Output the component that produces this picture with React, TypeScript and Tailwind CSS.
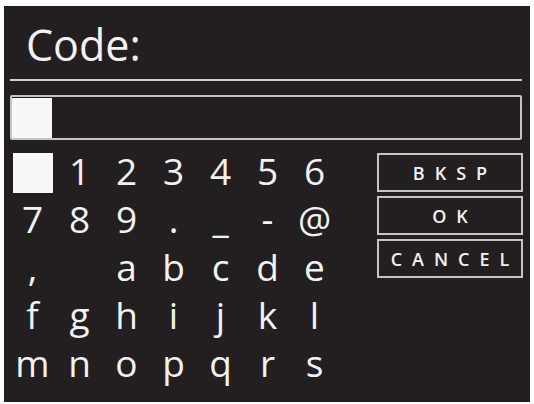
const rows: string[][] = [
  ['', '1', '2', '3', '4', '5', '6'],
  ['7', '8', '9', '.', '_', '-', '@'],
  [',', ' ', 'a', 'b', 'c', 'd', 'e'],
  ['f', 'g', 'h', 'i', 'j', 'k', 'l'],
  ['m', 'n', 'o', 'p', 'q', 'r', 's'],
];

const buttons = ['BKSP', 'OK', 'CANCEL'];

export default function App() {
  return (
    <div className="w-[534px] h-[404px] bg-white pt-[6px] pl-[4px] pr-[4px] pb-[2px] font-['Open_Sans',sans-serif]">
      <div className="w-full h-full bg-[#231f20] text-[#f2f2f2] flex flex-col">
        {/* title */}
        <div className="h-[73px] pt-[17px] pl-[22px] text-[43px] font-medium leading-none">Code:</div>
        <div className="mx-[6px] mr-[8px] h-[2px] bg-[#cfcfcf]" />

        {/* entry field */}
        <div className="mt-[14px] ml-[6px] mr-[8px] h-[45px] border-2 border-[#c4c4c4] rounded-[2px] flex items-center">
          <div className="w-[40px] h-[40px] bg-[#f8f8f8]" />
        </div>

        {/* keyboard + actions */}
        <div className="mt-[7px] flex pl-[5px] pr-[7px]">
          <div className="grid grid-cols-[repeat(7,47px)] auto-rows-[48px] text-[37px] font-medium leading-[48px]">
            {rows.map((row, r) =>
              row.map((ch, c) =>
                r === 0 && c === 0 ? (
                  <div key={`${r}-${c}`} className="flex justify-center pt-[6px]">
                    <div className="w-[40px] h-[40px] bg-[#f8f8f8]" />
                  </div>
                ) : (
                  <div key={`${r}-${c}`} className="text-center">
                    {ch}
                  </div>
                )
              )
            )}
          </div>

          <div className="ml-auto mt-[6px] flex flex-col gap-[4px]">
            {buttons.map((b) => (
              <div
                key={b}
                className="w-[146px] h-[39px] border-2 border-[#c4c4c4] flex items-center justify-center pl-[10px] text-[18px] font-semibold tracking-[10px] leading-none"
              >
                {b}
              </div>
            ))}
          </div>
        </div>
      </div>
    </div>
  );
}
